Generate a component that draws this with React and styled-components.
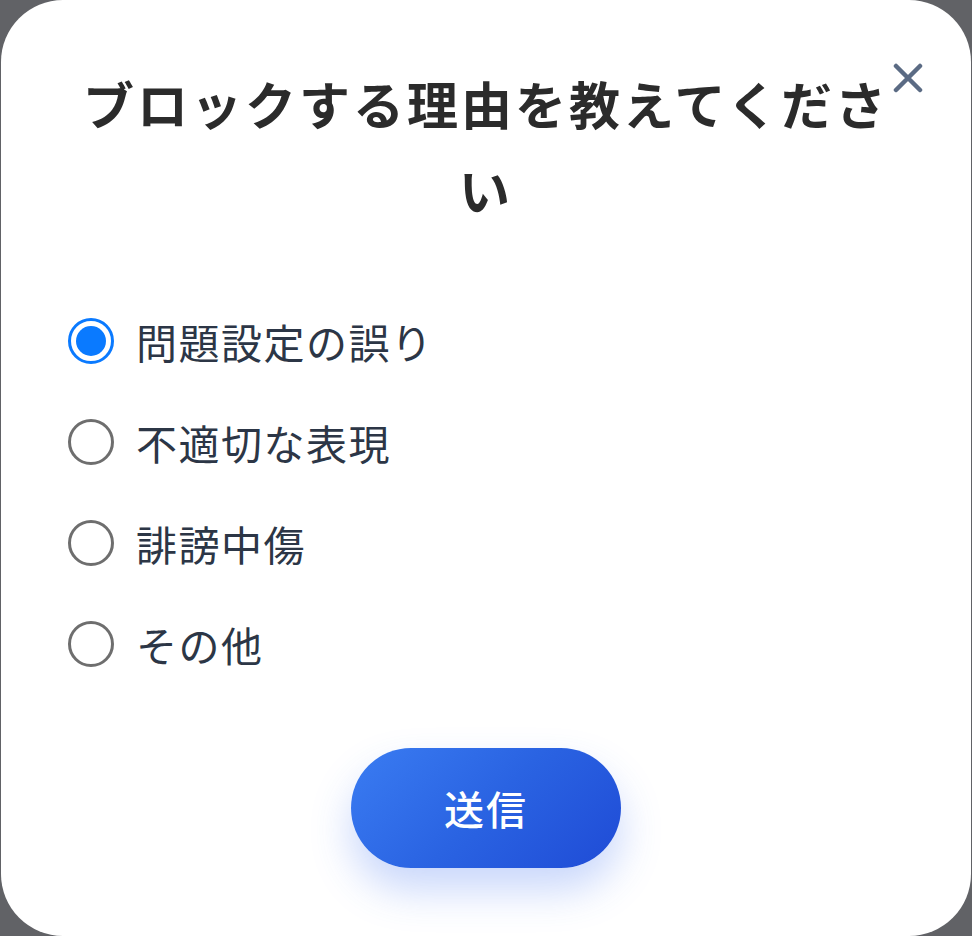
import React, { useState } from "react";
import styled, { createGlobalStyle } from "styled-components";

const Global = createGlobalStyle`
  html, body {
    margin: 0;
    padding: 0;
    background: #616266;
  }
  body {
    font-family: "Noto Sans CJK JP", "Noto Sans", sans-serif;
  }
`;

const Card = styled.div`
  position: relative;
  box-sizing: border-box;
  width: 970px;
  height: 936px;
  margin: 0 1px;
  background: #ffffff;
  border-radius: 62px;
  padding: 60px 0 0;
  display: flex;
  flex-direction: column;
  overflow: hidden;
`;

const Title = styled.h2`
  margin: 0 auto;
  width: 830px;
  text-align: center;
  font-size: 51px;
  line-height: 86px;
  font-weight: 700;
  letter-spacing: 3px;
  color: #2b2b2b;
`;

const CloseButton = styled.button`
  position: absolute;
  top: 60px;
  right: 45px;
  width: 36px;
  height: 36px;
  padding: 0;
  border: none;
  background: none;
  display: flex;
  align-items: center;
  justify-content: center;
  cursor: pointer;
`;

const Options = styled.div`
  display: flex;
  flex-direction: column;
  gap: 49px;
  margin-top: 83px;
  padding-left: 67px;
`;

const Option = styled.label`
  display: flex;
  align-items: center;
  gap: 22px;
  height: 52px;
  cursor: pointer;
`;

const Dot = styled.span`
  box-sizing: border-box;
  width: 46px;
  height: 46px;
  border-radius: 50%;
  border: 3px solid ${(p) => (p.$on ? "#0a7aff" : "#6e6e6e")};
  display: flex;
  align-items: center;
  justify-content: center;
  &::after {
    content: "";
    width: 30px;
    height: 30px;
    border-radius: 50%;
    background: #0a7aff;
    display: ${(p) => (p.$on ? "block" : "none")};
  }
`;

const OptionText = styled.span`
  font-size: 41px;
  line-height: 52px;
  color: #2c3646;
  letter-spacing: 1.5px;
`;

const Footer = styled.div`
  display: flex;
  justify-content: center;
  margin-top: 78px;
`;

const Submit = styled.button`
  width: 270px;
  height: 120px;
  border: none;
  border-radius: 60px;
  background: linear-gradient(135deg, #3a7cf2 0%, #2a63e2 50%, #1f4bd6 100%);
  box-shadow: 0 22px 40px rgba(60, 110, 240, 0.28);
  color: #ffffff;
  font-family: "Noto Sans CJK JP", sans-serif;
  font-size: 40px;
  font-weight: 500;
  letter-spacing: 2px;
  cursor: pointer;
`;

const reasons = ["問題設定の誤り", "不適切な表現", "誹謗中傷", "その他"];

export default function App() {
  const [sel, setSel] = useState(0);
  return (
    <>
      <Global />
      <Card>
        <CloseButton aria-label="閉じる">
          <svg width="30" height="30" viewBox="0 0 30 30">
            <path
              d="M3 3 L27 27 M27 3 L3 27"
              stroke="#5b6b84"
              strokeWidth="4.5"
              strokeLinecap="round"
            />
          </svg>
        </CloseButton>
        <Title>ブロックする理由を教えてください</Title>
        <Options>
          {reasons.map((r, i) => (
            <Option key={r} onClick={() => setSel(i)}>
              <Dot $on={sel === i} />
              <OptionText>{r}</OptionText>
            </Option>
          ))}
        </Options>
        <Footer>
          <Submit>送信</Submit>
        </Footer>
      </Card>
    </>
  );
}
